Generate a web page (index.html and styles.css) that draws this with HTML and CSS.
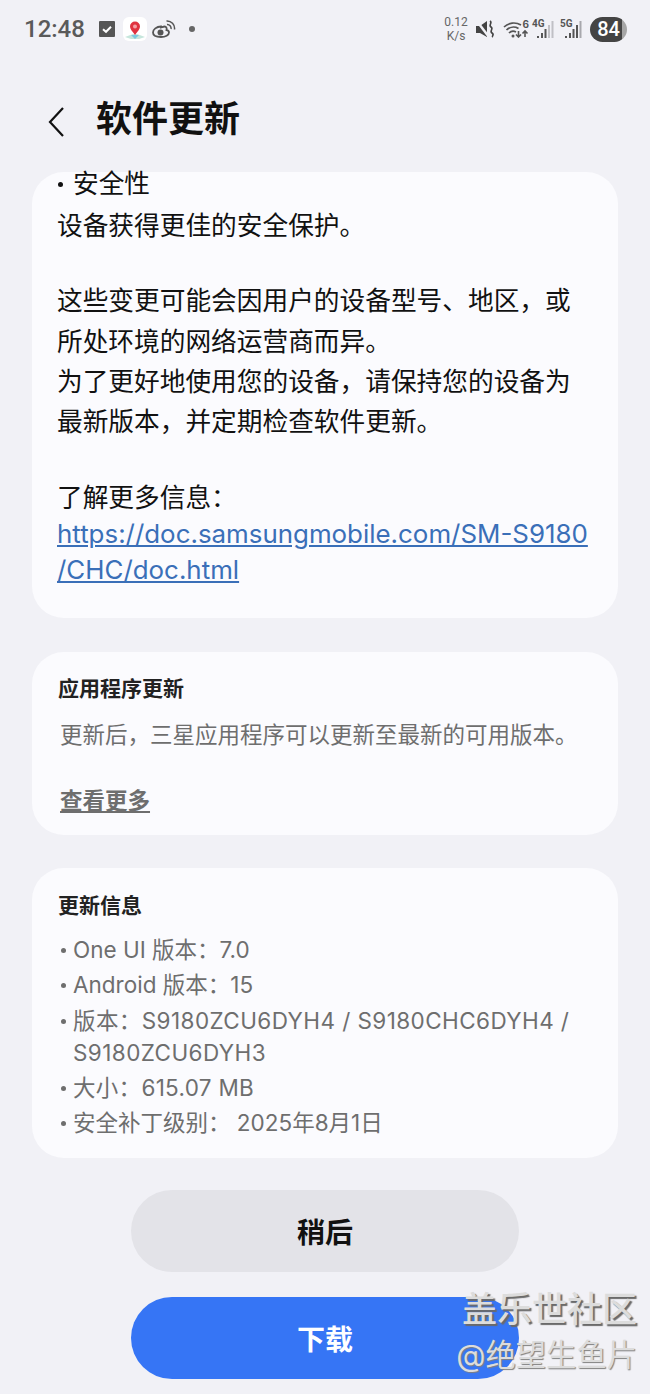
FILE: index.html
```html
<!DOCTYPE html>
<html>
<head>
<meta charset="utf-8">
<title>软件更新</title>
<link rel="stylesheet" href="styles.css">
</head>
<body>
<div class="screen">
  <!-- status bar -->
  <div class="status">
    <div class="status-left">
      <span class="clock">12:48</span>
      <svg class="ic-check" viewBox="0 0 16 16" width="16" height="16"><rect width="16" height="16" rx="1" fill="#555"/><path d="M4 8.200l3 2.600 5-5" fill="none" stroke="#fff" stroke-width="2"/></svg>
      <svg class="ic-map" viewBox="0 0 24 24" width="24" height="24"><rect width="24" height="24" rx="6" fill="#fff"/><path d="M2 20l8-3h4l8 3-6 2H8z" fill="#c6e6dc"/><path d="M12 22l-4-4h8z" fill="#7cc8de"/><path d="M12 18c-3-4-5-6-5-8.500a5 5 0 0 1 10 0c0 2.500-2 4.500-5 8.500z" fill="#e0323f"/><circle cx="12" cy="9.500" r="2" fill="#f3a0a6"/></svg>
      <svg class="ic-weibo" viewBox="0 0 24 18" width="24" height="18"><path d="M9 6.500c-4.500 0-8 3-8 6s3.500 4.500 8 4.500 8-2 8-4.500c0-1.800-1.500-2.300-2.500-2.500.5-1.800 0-3.500-2-3.500-1 0-2 .5-3.500 1z" fill="none" stroke="#555" stroke-width="1.800"/><circle cx="8.500" cy="12.500" r="3" fill="#555"/><path d="M14.500 1a7.500 7.500 0 0 1 8 8.500M15 4.500a3.800 3.800 0 0 1 4 4.500" fill="none" stroke="#555" stroke-width="1.500"/></svg>
      <span class="dot"></span>
    </div>
    <div class="status-right">
      <span class="speed">0.12<br>K/s</span>
      <svg class="ic-mute" viewBox="0 0 20 20" width="20" height="20"><path d="M1 7h4l7-5v16l-7-4H1z" fill="#444"/><path d="M1 1l13 17" stroke="#f1f1f6" stroke-width="2.500"/><path d="M15 2c3 2-2 4 1 6s-2 4 1 6-1 3 1 4" fill="none" stroke="#444" stroke-width="1.600"/></svg>
      <span class="wifi">
        <svg viewBox="0 0 26 18" width="26" height="18"><path d="M1 7a14 14 0 0 1 17-2M3.500 10a10 10 0 0 1 12-1.500M6 13a6 6 0 0 1 7-1" fill="none" stroke="#555" stroke-width="1.700"/><circle cx="10" cy="16" r="1.500" fill="#555"/><path d="M15.500 11v6M13 14.500l2.500 2.500 2.500-2.500M22 17v-6M19.500 13.500l2.500-2.500 2.500 2.500" fill="none" stroke="#555" stroke-width="1.600"/></svg>
        <span class="six">6</span>
      </span>
      <span class="signal">
        <svg viewBox="0 0 22 18" width="22" height="18"><path d="M6 18v-2M10 18v-5M13.500 18v-9" stroke="#555" stroke-width="2"/><path d="M17 18V5M20.500 18V1" stroke="#c0c0c5" stroke-width="2"/></svg>
        <b>4G</b>
      </span>
      <span class="signal">
        <svg viewBox="0 0 22 18" width="22" height="18"><path d="M6 18v-2M10 18v-5M13.500 18v-9M17 18V5" stroke="#555" stroke-width="2"/><path d="M20.500 18V1" stroke="#a8a8ad" stroke-width="2"/></svg>
        <b>5G</b>
      </span>
      <span class="battery">84</span>
    </div>
  </div>

  <div class="head">
    <svg viewBox="0 0 20 32" width="20" height="32"><path d="M17 2L4 16l13 14" fill="none" stroke="#111" stroke-width="2.200"/></svg>
    <h1>软件更新</h1>
  </div>

  <div class="card card-notes">
    <p class="first"><span class="bullet"></span>安全性</p>
    <p class="line">设备获得更佳的安全保护。</p>
    <p class="line gap">这些变更可能会因用户的设备型号、地区，或<br>所处环境的网络运营商而异。<br>为了更好地使用您的设备，请保持您的设备为<br>最新版本，并定期检查软件更新。</p>
    <p class="line gap more-info">了解更多信息：</p>
    <a class="link">https://doc.samsungmobile.com/SM-S9180<br>/CHC/doc.html</a>
  </div>

  <div class="card card-apps">
    <h2>应用程序更新</h2>
    <p class="muted">更新后，三星应用程序可以更新至最新的可用版本。</p>
    <a class="more">查看更多</a>
  </div>

  <div class="card card-info">
    <h2>更新信息</h2>
    <ul class="info">
      <li>One UI 版本：7.0</li>
      <li>Android 版本：15</li>
      <li class="lat">版本：S9180ZCU6DYH4 / S9180CHC6DYH4 / S9180ZCU6DYH3</li>
      <li class="lat-short">大小：615.07 MB</li>
      <li>安全补丁级别： 2025年8月1日</li>
    </ul>
  </div>

  <div class="buttons">
    <div class="btn later">稍后</div>
    <div class="btn download">下载</div>
  </div>

  <div class="mark">
    <div class="mark-name">盖乐世社区</div>
    <div class="mark-user">@绝望生鱼片</div>
  </div>
</div>
</body>
</html>
```

FILE: styles.css
```css
* { box-sizing: border-box; }
html, body { margin: 0; padding: 0; }
body {
  width: 650px;
  height: 1394px;
  overflow: hidden;
  background: #f1f1f6;
  font-family: "Inter", "Noto Sans CJK SC", sans-serif;
  color: #111;
}
.screen { position: relative; height: 1394px; }

/* status bar */
.status {
  height: 60px;
  padding: 14px 23px 0 24px;
  display: flex;
  justify-content: space-between;
  align-items: flex-start;
  color: #555;
}
.status-left { display: flex; align-items: center; height: 30px; }
.clock { font-family: Roboto, sans-serif; font-size: 24px; font-weight: 500; width: 75px; color: #5a5a5a; }
.ic-check { margin-right: 8px; }
.ic-map { margin-right: 5px; }
.ic-weibo { margin-right: 13px; }
.dot { width: 6px; height: 6px; border-radius: 50%; background: #666; }
.status-right { display: flex; align-items: center; height: 30px; }
.speed { font-family: Roboto, sans-serif; font-size: 12px; line-height: 14px; text-align: center; width: 24px; color: #666; margin-right: 7px; }
.ic-mute { margin-right: 8px; }
.wifi { position: relative; width: 26px; height: 18px; margin-right: 3px; }
.wifi svg, .signal svg { display: block; }
.six { position: absolute; right: 0; top: -2px; font-size: 10px; line-height: 12px; font-weight: 700; color: #555; }
.signal { position: relative; width: 22px; height: 18px; margin-right: 6px; }
.signal b { position: absolute; left: 0; top: -1px; font-size: 10px; line-height: 10px; font-family: Roboto, sans-serif; color: #555; }
.battery {
  width: 37px;
  height: 25px;
  margin-left: 2px;
  border-radius: 13px;
  background: linear-gradient(90deg, #444 86%, #a6a6a6 86%);
  color: #fff;
  font-family: Roboto, sans-serif;
  font-size: 20px;
  font-weight: 500;
  line-height: 25px;
  text-align: center;
}

/* title */
.head { height: 112px; padding-top: 33px; padding-left: 46px; display: flex; align-items: flex-start; }
.head svg { margin-top: 13px; }
.head h1 { margin: 0 0 0 30px; font-size: 36px; line-height: 52px; font-weight: 700; }

/* cards */
.card { margin: 0 32px; background: #fbfbfe; border-radius: 32px; }
.card-notes { height: 446px; padding: 0 20px 0 25px; font-size: 25.700px; white-space: nowrap; }
.card-notes p { margin: 0; line-height: 40.300px; }
.first { height: 34px; position: relative; top: -8px; }
.bullet { display: inline-block; width: 5px; height: 5px; margin: 0 10px 6px 1px; border-radius: 50%; background: #111; }
.card-notes .gap { margin-top: 35px; }
.card-notes .more-info { margin-top: 36px; }
.link { display: block; margin-top: -3px; color: #3a6fb8; font-size: 25.900px; text-decoration: underline; line-height: 36px; }
.card h2 { margin: 0; font-size: 21px; line-height: 32px; font-weight: 700; color: #222; }
.card-apps { height: 183px; margin-top: 34px; padding: 21px 26px 0; }
.muted { margin: 14px 0 0 2px; font-size: 22.500px; line-height: 32px; color: #6e6e6e; white-space: nowrap; }
.more { display: inline-block; margin: 34px 0 0 2px; font-size: 22.500px; line-height: 32px; color: #6e6e6e; font-weight: 700; text-decoration: underline; }
.card-info { height: 290px; margin-top: 33px; padding: 22px 26px 0; }
.info { list-style: none; margin: 12px 0 0; padding: 0; font-size: 22.500px; color: #6e6e6e; }
.info li { position: relative; padding-left: 15px; line-height: 32px; margin-bottom: 3.300px; }
.info li::before { content: ""; position: absolute; left: 3px; top: 14px; width: 5px; height: 5px; border-radius: 50%; background: #6e6e6e; }
.info .lat { letter-spacing: 0.420px; }
.info .lat-short { letter-spacing: 0.300px; }

/* buttons */
.buttons { margin-top: 32px; padding: 0 131px; display: flex; flex-direction: column; gap: 25px; }
.btn { height: 82px; border-radius: 41px; font-size: 28px; font-weight: 700; line-height: 86px; text-align: center; }
.later { background: #e3e3e8; color: #111; }
.download { background: #3675f5; color: #fff; }

/* watermark over the corner */
.mark { position: absolute; right: 13px; top: 1289px; text-align: right; color: #dcdcdc; }
.mark-name { font-size: 35px; line-height: 40px; font-weight: 500; text-shadow: 2px 2px 1px #6a6a6a; }
.mark-user { font-size: 30.300px; line-height: 40px; margin-top: 6px; text-shadow: 1px 1px 1px #808080; }
```
